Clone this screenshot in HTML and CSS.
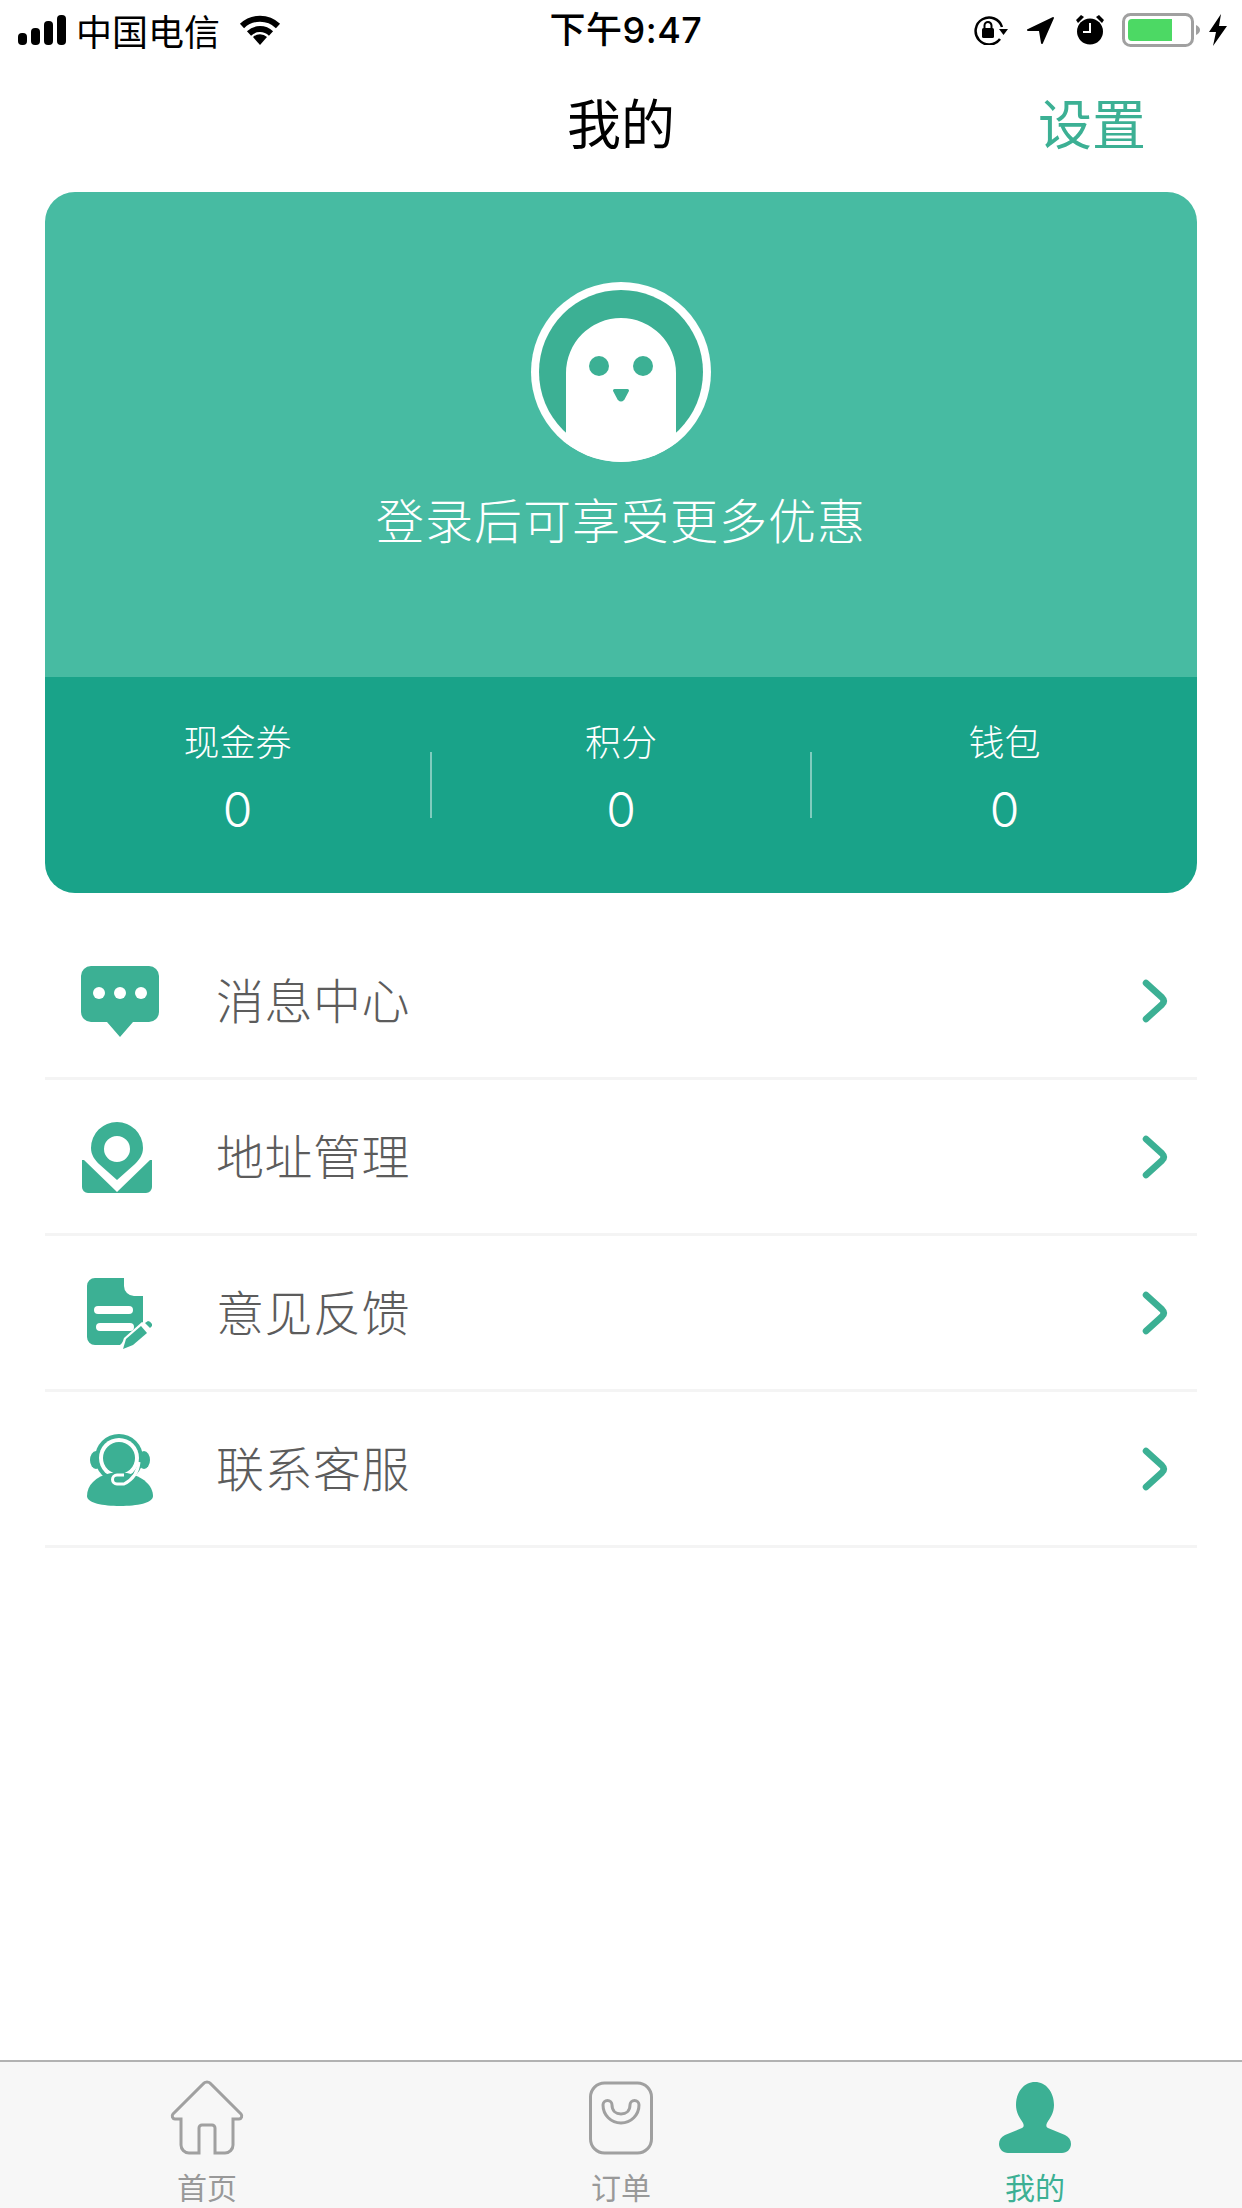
FILE: index.html
```html
<!DOCTYPE html>
<html lang="zh-CN">
<head>
  <meta charset="UTF-8" />
  <meta name="viewport" content="width=device-width, initial-scale=1.0"/>
  <title>我的</title>
  <link rel="stylesheet" href="styles.css">
</head>
<body>
  <div class="page">
    <!-- status bar -->
    <div class="status-bar">
      <div class="status-left">
        <svg class="ico-signal" width="48" height="30" viewBox="0 0 48 30">
          <rect x="0" y="18" width="9" height="12" rx="4"/>
          <rect x="13" y="13" width="9" height="17" rx="4"/>
          <rect x="26" y="6" width="9" height="24" rx="4"/>
          <rect x="39" y="0" width="9" height="30" rx="4"/>
        </svg>
        <span class="carrier">中国电信</span>
        <svg class="ico-wifi" width="42" height="30" viewBox="0 0 42 30">
          <path d="M3 11 A26 26 0 0 1 39 11" fill="none" stroke="#000" stroke-width="6"/>
          <path d="M10 18.500 A16 16 0 0 1 32 18.500" fill="none" stroke="#000" stroke-width="6"/>
          <path d="M14 22 A10 10 0 0 1 28 22 L21 30 Z"/>
        </svg>
      </div>
      <div class="status-time">下午9:47</div>
      <div class="status-right">
        <svg class="ico-lock" width="34" height="30" viewBox="0 0 34 30">
          <path d="M26 24 A13.500 13.500 0 1 1 28 12" fill="none" stroke="#000" stroke-width="2.500"/>
          <path d="M25 14 H34 L29.500 20 Z"/>
          <rect x="8" y="13" width="12" height="10" rx="1.500"/>
          <path d="M10.500 13 V10.500 a3.500 3.500 0 0 1 7 0 V13" fill="none" stroke="#000" stroke-width="2"/>
        </svg>
        <svg class="ico-arrow" width="28" height="28" viewBox="0 0 28 28">
          <path d="M1 13 L26 1 a1 1 0 0 1 1 1 L16 27 a1 1 0 0 1-2 0 L12 15 L1 15 a1 1 0 0 1 0-2z"/>
        </svg>
        <svg class="ico-alarm" width="28" height="30" viewBox="0 0 28 30">
          <circle cx="14" cy="16.500" r="13"/>
          <path d="M14 8 V17 H7" fill="none" stroke="#fff" stroke-width="2"/>
          <path d="M0 5 L5 0 L8 2 L2 8 Z M28 5 L23 0 L20 2 L26 8 Z"/>
        </svg>
        <svg class="ico-battery" width="78" height="34" viewBox="0 0 78 34">
          <rect x="1.500" y="1.500" width="69" height="31" rx="7" fill="none" stroke="#a0a0a0" stroke-width="3"/>
          <path d="M6 10 a4 4 0 0 1 4-4 H50 V28 H10 a4 4 0 0 1-4-4z" fill="#4cd964"/>
          <path d="M74 12 Q78 14 78 17 Q78 20 74 22 Z" fill="#a0a0a0"/>
        </svg>
        <svg class="ico-bolt" width="18" height="32" viewBox="0 0 18 32">
          <path d="M12 0 L0 18 H7 L4 32 L18 12 H10 Z"/>
        </svg>
      </div>
    </div>

    <!-- nav -->
    <div class="nav">
      <div></div>
      <div class="nav-title">我的</div>
      <div class="nav-action">设置</div>
    </div>

    <!-- user card -->
    <div class="card">
      <div class="card-top">
        <svg class="avatar" width="180" height="180" viewBox="0 0 180 180">
          <circle cx="90" cy="90" r="90" fill="#fff"/>
          <circle cx="90" cy="90" r="82" fill="#3cb094"/>
          <path d="M35 91 a55 55 0 0 1 110 0 V161 A90 90 0 0 1 35 161z" fill="#fff"/>
          <circle cx="68" cy="84" r="10" fill="#3cb094"/>
          <circle cx="112" cy="84" r="10" fill="#3cb094"/>
          <path d="M83.500 108.500 H96.500 L92 117 Q90 119 88 117 Z" fill="#3cb094" stroke="#3cb094" stroke-width="3" stroke-linejoin="round"/>
        </svg>
        <div class="login-tip">登录后可享受更多优惠</div>
      </div>
      <div class="card-stats">
        <div class="stat">
          <div class="stat-label">现金券</div>
          <div class="stat-value">0</div>
        </div>
        <div class="stat-sep"></div>
        <div class="stat">
          <div class="stat-label">积分</div>
          <div class="stat-value">0</div>
        </div>
        <div class="stat-sep"></div>
        <div class="stat">
          <div class="stat-label">钱包</div>
          <div class="stat-value">0</div>
        </div>
      </div>
    </div>

    <!-- menu -->
    <div class="menu">
      <div class="menu-row">
        <svg class="menu-icon" width="100" height="100" viewBox="0 0 100 100">
          <path d="M21 14 H79 a10 10 0 0 1 10 10 V60 a10 10 0 0 1-10 10 H63 L50 85 L37 70 H21 a10 10 0 0 1-10-10 V24 a10 10 0 0 1 10-10z"/>
          <circle cx="29" cy="41" r="6" fill="#fff"/>
          <circle cx="50" cy="41" r="6" fill="#fff"/>
          <circle cx="71" cy="41" r="6" fill="#fff"/>
        </svg>
        <span class="menu-text">消息中心</span>
        <svg class="chevron" width="30" height="48" viewBox="0 0 30 48"><path d="M7 6 L23 20.500 q3.500 3.500 0 7 L7 42"/></svg>
      </div>
      <div class="menu-row">
        <svg class="menu-icon" width="100" height="100" viewBox="0 0 100 100">
          <path fill-rule="evenodd" d="M47 14 a26 26 0 0 1 26 26 c0 7-4 12-8 16 L47 72 L29 56 c-4-4-8-9-8-16 a26 26 0 0 1 26-26z M47 28 a13 13 0 1 0 0 26 a13 13 0 0 0 0-26z"/>
          <path d="M12 52 L14 52 L47 84 L80 52 L82 52 V79 a6 6 0 0 1-6 6 H18 a6 6 0 0 1-6-6z"/>
        </svg>
        <span class="menu-text">地址管理</span>
        <svg class="chevron" width="30" height="48" viewBox="0 0 30 48"><path d="M7 6 L23 20.500 q3.500 3.500 0 7 L7 42"/></svg>
      </div>
      <div class="menu-row">
        <svg class="menu-icon" width="100" height="100" viewBox="0 0 100 100">
          <path d="M25 14 H54 V22 a10 10 0 0 0 10 10 H73 V58 L50 81 H25 a8 8 0 0 1-8-8 V22 a8 8 0 0 1 8-8z"/>
          <rect x="24" y="42" width="39" height="8" rx="4" fill="#fff"/>
          <rect x="26" y="59" width="38" height="8" rx="4" fill="#fff"/>
          <path d="M49 88 L54 74 L72 58 L82 68 L65 84 Z" fill="#fff"/>
          <path d="M53 85 L56 75 L71 62 L77 69 L63 81 Z"/>
          <path d="M75 59 L78 57 Q80 57 82 60 L82 62 L80 64 Z"/>
        </svg>
        <span class="menu-text">意见反馈</span>
        <svg class="chevron" width="30" height="48" viewBox="0 0 30 48"><path d="M7 6 L23 20.500 q3.500 3.500 0 7 L7 42"/></svg>
      </div>
      <div class="menu-row">
        <svg class="menu-icon" width="100" height="100" viewBox="0 0 100 100">
          <circle cx="49" cy="38" r="24"/>
          <ellipse cx="26" cy="40" rx="6" ry="9"/>
          <ellipse cx="74" cy="40" rx="6" ry="9"/>
          <circle cx="49" cy="38" r="20" fill="#fff"/>
          <circle cx="49" cy="38" r="16"/>
          <path d="M17 76 c0-10 8-20 24-23 h16 c16 3 26 13 26 23 c0 7-16 10-33 10 s-33-3-33-10z"/>
          <path d="M69 42 c-1 10-7 18-15 22 h-7 a4 4 0 0 1 0-9 h7" fill="none" stroke="#fff" stroke-width="3"/>
        </svg>
        <span class="menu-text">联系客服</span>
        <svg class="chevron" width="30" height="48" viewBox="0 0 30 48"><path d="M7 6 L23 20.500 q3.500 3.500 0 7 L7 42"/></svg>
      </div>
    </div>

    <!-- tab bar -->
    <div class="tabbar">
      <div class="tab">
        <svg class="tab-icon" width="80" height="80" viewBox="0 0 80 80">
          <path d="M32 75 H22 a8 8 0 0 1-8-8 V41 H8 a3 3 0 0 1-2-5 L36 6 a5 5 0 0 1 8 0 L74 36 a3 3 0 0 1-2 5 H66 V67 a8 8 0 0 1-8 8 H48 V50 a3 3 0 0 0-3-3 H35 a3 3 0 0 0-3 3z"/>
        </svg>
        <span class="tab-text">首页</span>
      </div>
      <div class="tab">
        <svg class="tab-icon" width="80" height="80" viewBox="0 0 80 80">
          <rect x="9.500" y="5" width="61" height="70" rx="14"/>
          <path d="M22 27 a4.500 4.500 0 0 1 9 0 c0 6 4 9 9 9 s9-3 9-9 a4.500 4.500 0 0 1 9 0 c0 10-8 18-18 18 s-18-8-18-18z"/>
        </svg>
        <span class="tab-text">订单</span>
      </div>
      <div class="tab tab-active">
        <svg class="tab-icon" width="80" height="80" viewBox="0 0 80 80">
          <path d="M40 4 c11 0 19 10 19 23 c0 8-4 13-7 18 c-1 2-1 4 1 5 L70 57 c4 2 6 5 6 9 c0 5-4 9-9 9 H13 c-5 0-9-4-9-9 c0-4 2-7 6-9 L27 50 c2-1 2-3 1-5 c-3-5-7-10-7-18 C21 14 29 4 40 4z"/>
        </svg>
        <span class="tab-text">我的</span>
      </div>
    </div>
  </div>
</body>
</html>
```

FILE: styles.css
```css
* {
  box-sizing: border-box;
}

body {
  margin: 0;
  background: #fff;
  font-family: "Noto Sans CJK SC", "Liberation Sans", sans-serif;
}

.page {
  width: 1242px;
  height: 2208px;
  display: flex;
  flex-direction: column;
  overflow: hidden;
}

/* status bar */
.status-bar {
  height: 60px;
  flex: none;
  display: grid;
  grid-template-columns: 1fr auto 1fr;
  align-items: center;
  color: #000;
}

.status-left {
  display: flex;
  align-items: center;
  padding-left: 18px;
}

.carrier {
  font-size: 36px;
  line-height: 60px;
  margin-left: 10px;
  white-space: nowrap;
}

.ico-wifi {
  margin-left: 19px;
}

.status-time {
  font-size: 36px;
  line-height: 60px;
  font-weight: 500;
  padding-left: 10px;
  white-space: nowrap;
  letter-spacing: 0.5px;
  font-family: "Inter", "Noto Sans CJK SC", sans-serif;
}

.status-right {
  display: flex;
  align-items: center;
  justify-content: flex-end;
  padding-right: 15px;
}

.ico-arrow { margin-left: 19px; }
.ico-alarm { margin-left: 21px; }
.ico-battery { margin-left: 18px; }
.ico-bolt { margin-left: 9px; }

/* nav */
.nav {
  height: 128px;
  padding-bottom: 6px;
  margin-bottom: 4px;
  display: grid;
  grid-template-columns: 1fr auto 1fr;
  align-items: center;
}

.nav-title {
  font-size: 54px;
  color: #000;
}

.nav-action {
  font-size: 54px;
  color: #3cb094;
  text-align: right;
  padding-right: 96px;
}

/* card */
.card {
  margin: 0 45px;
  height: 701px;
  border-radius: 30px;
  overflow: hidden;
  display: flex;
  flex-direction: column;
}

.card-top {
  height: 485px;
  background: #47bba2;
  display: flex;
  flex-direction: column;
  align-items: center;
  padding-top: 90px;
}

.login-tip {
  margin-top: 26px;
  font-size: 48px;
  line-height: 60px;
  color: #fff;
  font-weight: 300;
  letter-spacing: 1px;
}

.card-stats {
  flex: 1;
  background: #19a389;
  display: grid;
  grid-template-columns: 1fr 2px 378px 2px 1fr;
  align-items: center;
  color: #fff;
}

.stat {
  text-align: center;
  padding-bottom: 11px;
}

.stat-label {
  font-size: 36px;
  line-height: 40px;
  font-weight: 300;
}

.stat-value {
  margin-top: 20px;
  font-size: 48px;
  line-height: 60px;
  font-weight: 300;
  font-family: "Inter", sans-serif;
}

.stat-sep {
  height: 66px;
  background: rgba(255, 255, 255, 0.45);
}

/* menu */
.menu {
  margin: 31px 45px 0;
}

.menu-row {
  height: 156px;
  display: flex;
  align-items: center;
  border-bottom: 3px solid #f4f4f4;
}

.menu-icon {
  margin: 2px 46px 0 25px;
  fill: #3cb094;
  flex: none;
}

.menu-text {
  font-size: 48px;
  color: #5c5c5c;
  font-weight: 300;
  padding-bottom: 5px;
  letter-spacing: 0.5px;
}

.chevron {
  margin-left: auto;
  margin-right: 28px;
  fill: none;
  stroke: #3cb094;
  stroke-width: 6.5;
  stroke-linecap: round;
  stroke-linejoin: round;
}

/* tab bar */
.tabbar {
  margin-top: auto;
  height: 148px;
  border-top: 2px solid #b2b2b2;
  background: #f7f7f7;
  display: grid;
  grid-template-columns: repeat(3, 1fr);
}

.tab {
  display: flex;
  flex-direction: column;
  align-items: center;
  padding-top: 16px;
  color: #999;
}

.tab-icon {
  fill: none;
  stroke: #a0a0a0;
  stroke-width: 3;
}

.tab-text {
  font-size: 30px;
  line-height: 36px;
  margin-top: 10px;
}

.tab-active {
  color: #3cb094;
}

.tab-active .tab-icon {
  fill: #3cb094;
  stroke: none;
}
```
